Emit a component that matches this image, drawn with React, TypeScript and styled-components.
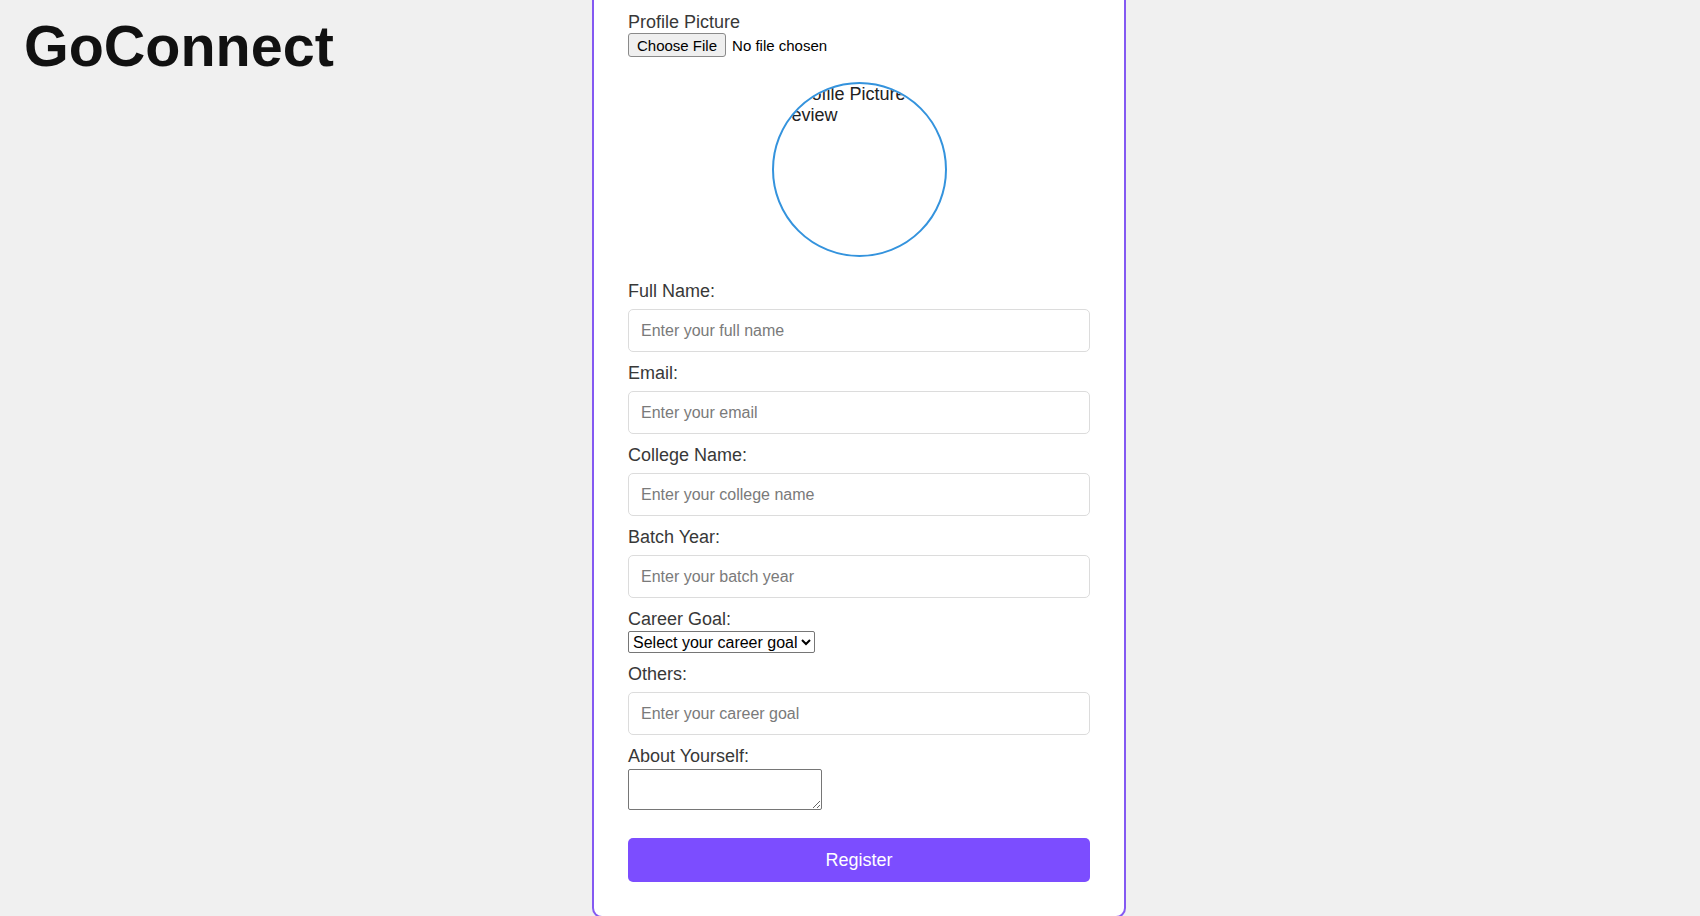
import React from "react";
import styled, { createGlobalStyle } from "styled-components";

const GlobalStyle = createGlobalStyle`
  html, body {
    margin: 0;
    padding: 0;
    background: #f0f0f0;
    font-family: "Liberation Sans", Arial, sans-serif;
  }
  *, *::before, *::after { box-sizing: border-box; }
`;

const Page = styled.div`
  display: grid;
  grid-template-columns: 592px 534px 1fr;
  align-items: start;
  height: 916px;
  overflow: hidden;
`;

const Brand = styled.h1`
  margin: 13px 0 0 24px;
  font-size: 57.5px;
  font-weight: 700;
  line-height: normal;
  color: #111;
`;

const Card = styled.form`
  display: flex;
  flex-direction: column;
  background: #fff;
  border: 2px solid #8459f2;
  border-top: none;
  border-radius: 0 0 10px 10px;
  padding: 12px 34px 34px;
`;

const ProfileField = styled.div`
  display: flex;
  flex-direction: column;
`;

const Label = styled.label`
  display: block;
  font-size: 18px;
  line-height: 21px;
  color: #383838;
`;

const FileRow = styled.div`
  display: flex;
  align-items: center;
  gap: 6px;
  font-size: 15px;
  color: #000;
`;

const ChooseButton = styled.button`
  height: 24px;
  padding: 0 8px;
  font-family: inherit;
  font-size: 15px;
  color: #000;
  background: #efefef;
  border: 1px solid #8a8a8a;
  border-radius: 3px;
`;

const Preview = styled.div`
  width: 175px;
  height: 175px;
  margin: 25px auto 24px;
  border: 2px solid #3493dd;
  border-radius: 50%;
  overflow: hidden;
  align-self: center;
`;

const AltText = styled.div`
  font-size: 18px;
  line-height: 21px;
  color: #222;
  text-indent: 20px;
`;

const Field = styled.div`
  display: flex;
  flex-direction: column;
  align-items: flex-start;
  margin-bottom: 11px;
`;

const TextInput = styled.input`
  display: block;
  width: 100%;
  height: 43px;
  margin-top: 7px;
  padding: 0 12px;
  font-family: inherit;
  font-size: 16px;
  color: #222;
  background: #fff;
  border: 1px solid #dcdcdc;
  border-radius: 5px;
  &::placeholder { color: #7a7a7a; }
`;

const Select = styled.select`
  display: block;
  height: 22px;
  margin-top: 1px;
  padding: 0;
  font-family: inherit;
  font-size: 16px;
  color: #000;
  background: #fff;
  border: 1px solid #767676;
  border-radius: 2px;
`;

const TextArea = styled.textarea`
  display: block;
  width: 194px;
  height: 41px;
  margin-top: 2px;
  border: 1px solid #767676;
  border-radius: 2px;
  background: #fff;
`;

const RegisterButton = styled.button`
  width: 100%;
  height: 44px;
  margin-top: 17px;
  font-family: inherit;
  font-size: 18px;
  color: #fff;
  background: #7c4dff;
  border: none;
  border-radius: 5px;
`;

const textFields = [
  { id: "fullName", label: "Full Name:", placeholder: "Enter your full name" },
  { id: "email", label: "Email:", placeholder: "Enter your email" },
  { id: "college", label: "College Name:", placeholder: "Enter your college name" },
  { id: "batch", label: "Batch Year:", placeholder: "Enter your batch year" },
];

export default function App() {
  return (
    <>
      <GlobalStyle />
      <Page>
        <Brand>GoConnect</Brand>
        <Card onSubmit={(e) => e.preventDefault()}>
          <ProfileField>
            <Label>Profile Picture</Label>
            <FileRow>
              <ChooseButton type="button">Choose File</ChooseButton>
              <span>No file chosen</span>
            </FileRow>
          </ProfileField>
          <Preview>
            <AltText>Profile Picture Preview</AltText>
          </Preview>
          {textFields.map((f) => (
            <Field key={f.id}>
              <Label htmlFor={f.id}>{f.label}</Label>
              <TextInput id={f.id} placeholder={f.placeholder} />
            </Field>
          ))}
          <Field>
            <Label htmlFor="goal">Career Goal:</Label>
            <Select id="goal" defaultValue="">
              <option value="">Select your career goal</option>
              <option value="se">Software Engineer</option>
              <option value="ds">Data Scientist</option>
              <option value="other">Others</option>
            </Select>
          </Field>
          <Field>
            <Label htmlFor="others">Others:</Label>
            <TextInput id="others" placeholder="Enter your career goal" />
          </Field>
          <Field>
            <Label htmlFor="about">About Yourself:</Label>
            <TextArea id="about" />
          </Field>
          <RegisterButton type="submit">Register</RegisterButton>
        </Card>
      </Page>
    </>
  );
}
